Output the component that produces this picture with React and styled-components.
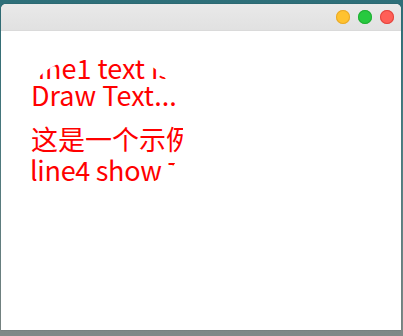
import React from "react";
import styled, { createGlobalStyle } from "styled-components";

const GlobalStyle = createGlobalStyle`
  html, body {
    margin: 0;
    padding: 0;
  }

  body {
    width: 403px;
    height: 336px;
    overflow: hidden;
    font-family: "Noto Sans CJK SC", "Noto Sans", sans-serif;
    background: linear-gradient(
      180deg,
      #2e6f79 0%,
      #4c7f84 40%,
      #7f8987 100%
    );
  }
`;

const Desktop = styled.div`
  display: flex;
  height: 336px;
  padding: 4px 2px 6px 1px;
  box-sizing: border-box;
`;

const Window = styled.div`
  flex: 1;
  display: flex;
  flex-direction: column;
  background: #fff;
  border-radius: 5px 5px 0 0;
  overflow: hidden;
  box-shadow: 0 0 1px rgba(0, 0, 0, 0.5);
`;

const TitleBar = styled.div`
  height: 26px;
  display: flex;
  align-items: center;
  justify-content: flex-end;
  gap: 8px;
  padding-right: 7px;
  background: linear-gradient(180deg, #e9e9e9 0%, #e1e1e1 100%);
  border-bottom: 1px solid #dadada;
`;

const Light = styled.span`
  width: 14px;
  height: 14px;
  border-radius: 50%;
  background: ${({ color }) => color};
  box-shadow: inset 0 0 0 1px ${({ rim }) => rim};
`;

const Content = styled.div`
  flex: 1;
  padding: 27px 0 0 29px;
`;

/* the painter's clip region: odd rounded shape, text cut by it */
const ClipBox = styled.div`
  width: 153px;
  height: 128px;
  overflow: hidden;
  border-radius: 60px 60px 50px 6px / 40px 70px 50px 6px;
  color: #ff0000;
  font-size: 27px;
  line-height: 27px;
  white-space: nowrap;
`;

const Line = styled.div`
  margin-top: ${({ gap }) => gap}px;
  padding-left: ${({ indent }) => indent || 0}px;
  letter-spacing: ${({ tight }) => (tight ? "-0.3px" : "normal")};
`;

const App = () => {
  return (
    <>
      <GlobalStyle />
      <Desktop>
        <Window>
          <TitleBar>
            <Light color="#ffc22f" rim="#e8a92a" />
            <Light color="#27c93f" rim="#22ad35" />
            <Light color="#ff5f57" rim="#e2463f" />
          </TitleBar>
          <Content>
            <ClipBox>
              <Line gap={-4}>line1 text is clipped</Line>
              <Line gap={0} indent={1}>Draw Text...</Line>
              <Line gap={17} indent={1}>这是一个示例文本</Line>
              <Line gap={4} tight>line4 show 文字</Line>
            </ClipBox>
          </Content>
        </Window>
      </Desktop>
    </>
  );
};

export default App;
